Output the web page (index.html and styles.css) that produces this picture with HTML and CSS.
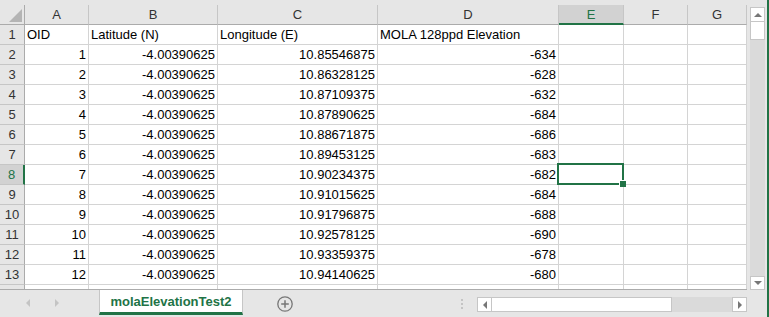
FILE: index.html
```html
<!DOCTYPE html>
<html lang="en">
<head>
  <meta charset="UTF-8">
  <title>molaElevationTest2</title>
  <link rel="stylesheet" href="styles.css">
</head>
<body>
  <div class="window">
    <div class="main">
      <div class="sheet" id="sheet">
        <div class="corner"><span class="corner-mark"></span></div>
        <div class="col-head">A</div>
        <div class="col-head">B</div>
        <div class="col-head">C</div>
        <div class="col-head">D</div>
        <div class="col-head sel">E</div>
        <div class="col-head">F</div>
        <div class="col-head">G</div>

        <div class="row-head">1</div>
        <div class="cell">OID</div>
        <div class="cell">Latitude (N)</div>
        <div class="cell">Longitude (E)</div>
        <div class="cell">MOLA 128ppd Elevation</div>
        <div class="cell"></div>
        <div class="cell"></div>
        <div class="cell"></div>
      </div>

      <div class="vscroll">
        <div class="vbtn up"><span class="arrow-up"></span></div>
        <div class="vthumb"></div>
        <div class="vtrack"></div>
        <div class="vbtn down"><span class="arrow-down"></span></div>
      </div>
    </div>

    <div class="tabbar">
      <div class="tab-nav">
        <span class="nav-left"></span>
        <span class="nav-right"></span>
      </div>
      <div class="tab">molaElevationTest2</div>
      <div class="add-sheet">
        <svg width="16" height="16" viewBox="0 0 16 16">
          <circle cx="8" cy="8" r="7.2" fill="none" stroke="#777" stroke-width="1.3"/>
          <path d="M8 4.2v7.6M4.2 8h7.6" stroke="#777" stroke-width="1.5"/>
        </svg>
      </div>
      <div class="splitter"><span></span><span></span><span></span></div>
      <div class="hscroll">
        <div class="hbtn"><span class="arrow-left"></span></div>
        <div class="hthumb"></div>
        <div class="htrack"></div>
        <div class="hbtn right"><span class="arrow-right"></span></div>
      </div>
    </div>
  </div>

  <script>
    const lon = ['10.85546875','10.86328125','10.87109375','10.87890625','10.88671875','10.89453125',
                 '10.90234375','10.91015625','10.91796875','10.92578125','10.93359375','10.94140625'];
    const elev = [-634,-628,-632,-684,-686,-683,-682,-684,-688,-690,-678,-680];
    const sheet = document.getElementById('sheet');

    function add(cls, text) {
      const d = document.createElement('div');
      d.className = cls;
      d.textContent = text;
      sheet.appendChild(d);
    }

    /* rows 2..13 */
    lon.forEach((l, i) => {
      const row = i + 2;
      add(row === 8 ? 'row-head sel' : 'row-head', row);
      add('cell num', i + 1);
      add('cell num', '-4.00390625');
      add('cell num', l);
      add('cell num', elev[i]);
      add(row === 8 ? 'cell active' : 'cell', '');
      add('cell', '');
      add('cell', '');
    });

    /* row 14, cut off by the sheet tabs */
    add('row-head part', '');
    for (let c = 0; c < 7; c++) add('cell part', '');
  </script>
</body>
</html>
```

FILE: styles.css
```css
:root {
  --green: #217346;
  --head-bg: #e6e6e6;
  --head-sel: #d2d2d2;
  --grid-line: #d4d4d4;
  --head-line: #ababab;
  --soft-line: #c6c6c6;
}
* { box-sizing: border-box; }
body {
  margin: 0;
  background: var(--head-bg);
  font-family: "Liberation Sans", Arial, sans-serif;
  font-size: 13px;
  color: #000;
}
.window {
  width: 769px; height: 317px;
  border-right: 2px solid var(--green);
  display: flex; flex-direction: column;
  overflow: hidden;
}
.main { display: flex; height: 290px; }

/* grid */
.sheet {
  display: grid;
  grid-template-columns: 25px 64px 129px 160px 181px 65px 64px 59px;
  grid-template-rows: 25px repeat(13, 20px) 4px;
  width: 747px; height: 290px;
  background: var(--head-bg);
  border-bottom: 1px solid var(--head-line);
}
.corner, .col-head {
  margin-top: 5px;
  background: var(--head-bg);
  border-right: 1px solid var(--soft-line);
  border-bottom: 1px solid var(--head-line);
}
.corner {
  display: flex; justify-content: flex-end; align-items: flex-end;
  padding: 0 2px 2px 0;
  border-right-color: var(--head-line);
}
.corner-mark {
  width: 0; height: 0;
  border-left: 13px solid transparent;
  border-bottom: 13px solid #b4b4b4;
}
.col-head { text-align: center; line-height: 19px; color: #333; }
.col-head.sel {
  background: var(--head-sel); color: var(--green);
  border-bottom: 2px solid var(--green);
}
.row-head {
  background: var(--head-bg);
  border-right: 1px solid var(--head-line);
  border-bottom: 1px solid var(--soft-line);
  text-align: center; color: #333;
  padding-top: 1px; line-height: 18px;
}
.row-head.sel {
  background: var(--head-sel); color: var(--green);
  border-right: 2px solid var(--green);
}
.cell {
  background: #fff;
  border-right: 1px solid var(--grid-line);
  border-bottom: 1px solid var(--grid-line);
  padding: 1px 2px 0;
  line-height: 18px;
  white-space: nowrap; overflow: hidden;
}
.num { text-align: right; }
.part { border-bottom: none; overflow: hidden; }
.cell.active { position: relative; overflow: visible; }
.cell.active::after {
  content: ""; position: absolute; z-index: 1;
  left: -2px; top: -2px; right: -1px; bottom: -1px;
  border: 2px solid var(--green);
}
.cell.active::before {
  content: ""; position: absolute; z-index: 2;
  right: -3px; bottom: -3px;
  width: 6px; height: 6px;
  background: var(--green);
  box-shadow: -1px -1px 0 #fff;
}

/* vertical scrollbar */
.vscroll {
  width: 20px;
  padding: 7px 2px 0 3px;
  display: flex; flex-direction: column;
}
.vbtn {
  height: 15px; background: #fff;
  border: 1px solid var(--soft-line);
  display: flex; align-items: center; justify-content: center;
}
.vbtn.down { height: 14px; }
.vthumb {
  height: 18px; background: #fff;
  border: 1px solid var(--soft-line); border-top: none;
}
.vtrack { flex: 1; background: #dadada; }
.arrow-up, .arrow-down {
  width: 0; height: 0;
  border-left: 4px solid transparent; border-right: 4px solid transparent;
}
.arrow-up { border-bottom: 4px solid #777; }
.arrow-down { border-top: 4px solid #777; }

/* sheet tabs */
.tabbar { display: flex; align-items: flex-start; height: 27px; }
.tab-nav {
  width: 99px; display: flex; gap: 25px;
  padding: 9px 0 0 26px;
}
.nav-left, .nav-right {
  width: 0; height: 0;
  border-top: 4px solid transparent; border-bottom: 4px solid transparent;
}
.nav-left { border-right: 4px solid #c4c4c4; }
.nav-right { border-left: 4px solid #c4c4c4; }
.tab {
  width: 144px; height: 25px;
  background: #fff;
  border: 1px solid var(--soft-line); border-top: none;
  border-bottom: 3px solid var(--green);
  color: var(--green); font-weight: bold;
  text-align: center; padding-top: 2px; line-height: 20px;
}
.add-sheet { margin: 6px 0 0 34px; width: 16px; height: 16px; }
.add-sheet svg { display: block; }
.splitter {
  margin: 9px 0 0 168px; width: 2px;
  display: flex; flex-direction: column; gap: 2px;
}
.splitter span { width: 2px; height: 2px; background: #c4c4c4; }
.hscroll {
  display: flex;
  margin: 7px 0 0 14px;
  width: 270px; height: 15px;
}
.hbtn {
  width: 15px; background: #fff;
  border: 1px solid var(--soft-line);
  display: flex; align-items: center; justify-content: center;
}
.hthumb {
  width: 180px; background: #fff;
  border: 1px solid var(--soft-line); border-left: none;
}
.htrack { flex: 1; background: #dadada; }
.arrow-left, .arrow-right {
  width: 0; height: 0;
  border-top: 4px solid transparent; border-bottom: 4px solid transparent;
}
.arrow-left { border-right: 4px solid #777; }
.arrow-right { border-left: 4px solid #777; }
```
